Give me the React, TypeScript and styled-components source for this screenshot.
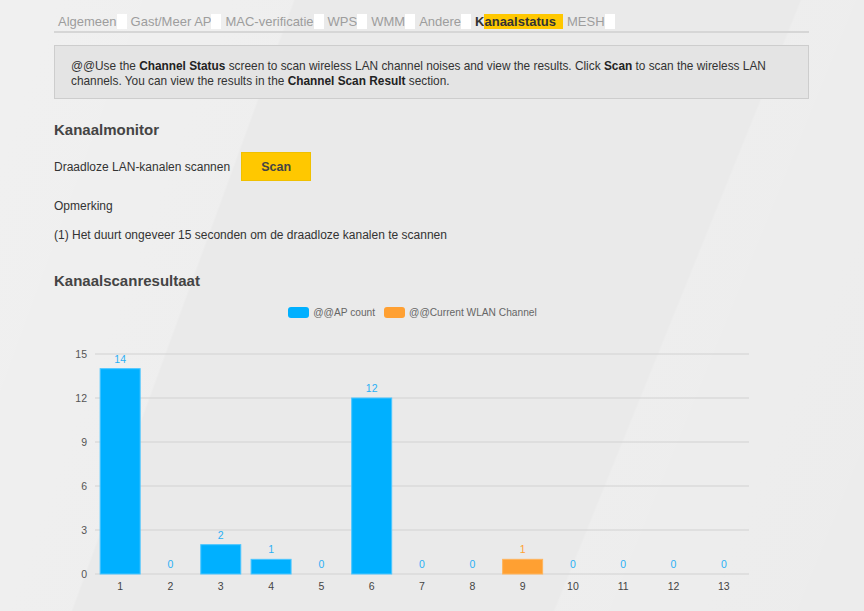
import React from "react";
import styled, { createGlobalStyle } from "styled-components";

const GlobalStyle = createGlobalStyle`
    html, body {
        margin: 0;
        padding: 0;
    }
    body {
        font-family: "Liberation Sans", Arial, sans-serif;
        color: #333;
        background: #ebebeb;
    }
`

const Page = styled.div`
    width: 864px;
    height: 611px;
    overflow: hidden;
    background:
        linear-gradient(112deg, rgba(255,255,255,0) 0%, rgba(255,255,255,0) 72%, rgba(255,255,255,0.18) 72.2%, rgba(255,255,255,0.1) 100%),
        linear-gradient(110deg, rgba(255,255,255,0.3) 0%, rgba(255,255,255,0.22) 27%, rgba(255,255,255,0) 27.2%),
        #eaeaea;
`

const Main = styled.div`
    width: 755px;
    margin-left: 54px;
    padding-top: 14px;
`

const TabBar = styled.ul`
    list-style: none;
    margin: 0;
    padding: 0 0 2px 0;
    display: flex;
    border-bottom: 2px solid #d6d6d6;
`

const Tab = styled.li<{ $active?: boolean }>`
    display: flex;
    align-items: center;
    height: 15px;
    padding-left: 4px;
    font-size: 13px;
    color: ${p => (p.$active ? "#333" : "#9d9d9d")};
    font-weight: ${p => (p.$active ? "bold" : "normal")};

    &::after {
        content: "";
        display: block;
        width: ${p => (p.$active ? "0" : "10px")};
        height: 15px;
        background: #fff;
    }
`

const Highlight = styled.span`
    background: #ffc800;
    padding-right: 7px;
    line-height: 15px;
`

const InfoBox = styled.div`
    margin-top: 12px;
    border: 1px solid #cdcdcd;
    background: #e4e4e4;
    padding: 13px 16px 9px 16px;
    font-size: 11.85px;
    line-height: 15px;
    color: #333;

    b {
        color: #222;
    }
`

const Heading = styled.h2`
    margin: 0;
    font-size: 15px;
    line-height: 18px;
    font-weight: bold;
    color: #444;
`

const Section = styled.section<{ $top: number }>`
    margin-top: ${p => p.$top}px;
`

const ScanRow = styled.div`
    display: flex;
    align-items: center;
    gap: 11px;
    margin-top: 13px;
    font-size: 12px;
`

const ScanButton = styled.button`
    width: 70px;
    height: 29px;
    border: 1px solid #f0c000;
    background: #ffc800;
    color: #444;
    font-family: inherit;
    font-weight: bold;
    font-size: 12.5px;
    padding: 0;
`

const Text = styled.p<{ $top: number }>`
    margin: ${p => p.$top}px 0 0 0;
    font-size: 12px;
    line-height: 16px;
`

const Legend = styled.div`
    display: flex;
    justify-content: center;
    align-items: center;
    gap: 9px;
    margin-top: 17px;
    margin-left: -38px;
    font-size: 10.2px;
    color: #666;
`

const LegendItem = styled.span`
    display: flex;
    align-items: center;
    gap: 4px;
`

const Swatch = styled.span<{ $color: string }>`
    display: inline-block;
    width: 21px;
    height: 11px;
    border-radius: 3px;
    background: ${p => p.$color};
`

const ChartWrap = styled.div`
    margin-top: 22px;
`

const blue = "#00b0ff";
const orange = "#ffa032";
const counts = [14, 0, 2, 1, 0, 12, 0, 0, 1, 0, 0, 0, 0];
const current = 9;

function Chart() {
    const left = 41;
    const right = 695;
    const top = 14;
    const bottom = 234;
    const step = (right - left) / 13;
    const unit = (bottom - top) / 15;
    const ticks = [0, 3, 6, 9, 12, 15];

    return (
        <svg width={755} height={262} style={{ display: "block" }}>
            {ticks.map(t => {
                const y = bottom - t * unit;
                return (
                    <g key={t}>
                        <line x1={left} x2={right} y1={y} y2={y} stroke="#d2d2d2" strokeWidth={1.2} />
                        <text x={33} y={y + 4} textAnchor="end" fontSize={10.5} fill="#555" fontFamily="Liberation Sans, Arial, sans-serif">{t}</text>
                    </g>
                );
            })}
            {counts.map((c, i) => {
                const cx = left + step * (i + 0.5);
                const h = c * unit;
                const isCur = i + 1 === current;
                const col = isCur ? orange : blue;
                return (
                    <g key={i}>
                        {c > 0 && (
                            <rect x={cx - 20} y={bottom - h} width={40} height={h} fill={col} stroke={isCur ? "#ffb45c" : "#4cc6ff"} strokeWidth={1} />
                        )}
                        <text x={cx} y={bottom - h - 6} textAnchor="middle" fontSize={10.5} fill={isCur ? orange : "#2bb0f5"} fontFamily="Liberation Sans, Arial, sans-serif">{c}</text>
                        <text x={cx} y={bottom + 16} textAnchor="middle" fontSize={10.5} fill="#444" fontFamily="Liberation Sans, Arial, sans-serif">{i + 1}</text>
                    </g>
                );
            })}
        </svg>
    );
}

const tabs = ["Algemeen", "Gast/Meer AP", "MAC-verificatie", "WPS", "WMM", "Andere"];

export default function App() {
    return (
        <Page>
            <GlobalStyle />
            <Main>
                <TabBar>
                    {tabs.map(t => (
                        <Tab key={t}>{t}</Tab>
                    ))}
                    <Tab $active>
                        K<Highlight>anaalstatus</Highlight>
                    </Tab>
                    <Tab>MESH</Tab>
                </TabBar>

                <InfoBox>
                    @@Use the <b>Channel Status</b> screen to scan wireless LAN channel noises and view the results. Click <b>Scan</b> to scan the wireless LAN channels. You can view the results in the <b>Channel Scan Result</b> section.
                </InfoBox>

                <Section $top={22}>
                    <Heading>Kanaalmonitor</Heading>
                    <ScanRow>
                        <span>Draadloze LAN-kanalen scannen</span>
                        <ScanButton>Scan</ScanButton>
                    </ScanRow>
                    <Text $top={17}>Opmerking</Text>
                    <Text $top={13}>(1) Het duurt ongeveer 15 seconden om de draadloze kanalen te scannen</Text>
                </Section>

                <Section $top={29}>
                    <Heading>Kanaalscanresultaat</Heading>
                    <Legend>
                        <LegendItem><Swatch $color={blue} />@@AP count</LegendItem>
                        <LegendItem><Swatch $color={orange} />@@Current WLAN Channel</LegendItem>
                    </Legend>
                    <ChartWrap>
                        <Chart />
                    </ChartWrap>
                </Section>
            </Main>
        </Page>
    );
}
